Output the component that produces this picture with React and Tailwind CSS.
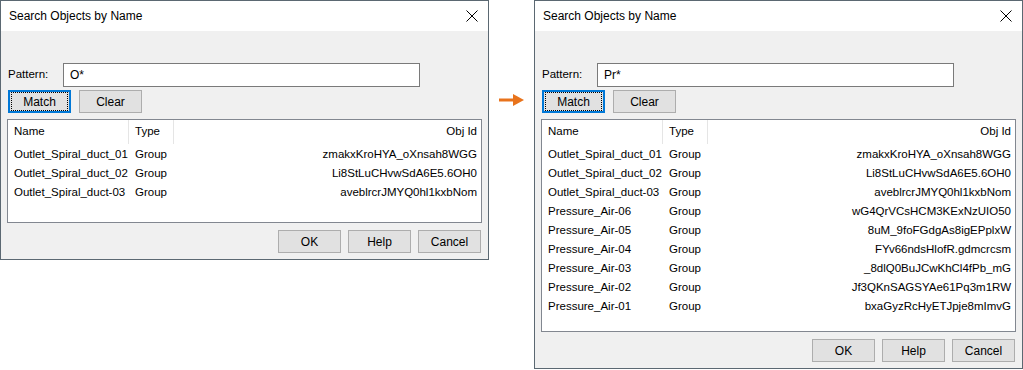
import React from 'react';

const leftRows = [
  ['Outlet_Spiral_duct_01', 'Group', 'zmakxKroHYA_oXnsah8WGG'],
  ['Outlet_Spiral_duct_02', 'Group', 'Li8StLuCHvwSdA6E5.6OH0'],
  ['Outlet_Spiral_duct-03', 'Group', 'aveblrcrJMYQ0hl1kxbNom'],
];

const rightRows = [
  ...leftRows,
  ['Pressure_Air-06', 'Group', 'wG4QrVCsHCM3KExNzUIO50'],
  ['Pressure_Air-05', 'Group', '8uM_9foFGdgAs8igEPplxW'],
  ['Pressure_Air-04', 'Group', 'FYv66ndsHlofR.gdmcrcsm'],
  ['Pressure_Air-03', 'Group', '_8dlQ0BuJCwKhCl4fPb_mG'],
  ['Pressure_Air-02', 'Group', 'Jf3QKnSAGSYAe61Pq3m1RW'],
  ['Pressure_Air-01', 'Group', 'bxaGyzRcHyETJpje8mImvG'],
];

const WinButton = ({ children, focused }) => (
  <div
    className={`w-[63px] h-[23px] bg-[#e1e1e1] flex items-center justify-center ${
      focused ? 'border-2 border-[#0078d7]' : 'border border-[#adadad]'
    }`}
  >
    {focused ? (
      <div className="w-full h-full m-[1px] border border-dotted border-black flex items-center justify-center">
        {children}
      </div>
    ) : (
      children
    )}
  </div>
);

const Dialog = ({ pattern, rows, listHeight }) => (
  <div className="w-[489px] flex flex-col border border-[#5b6872] bg-[#f0f0f0] text-[11.5px] text-black">
    {/* title bar */}
    <div className="h-[30px] bg-white flex items-center justify-between pl-[8px] pr-[10px] text-[12px]">
      <span>Search Objects by Name</span>
      <svg width="12" height="12" viewBox="0 0 12 12">
        <path d="M0.5 0.5 L11.5 11.5 M11.5 0.5 L0.5 11.5" stroke="#000" strokeWidth="1" />
      </svg>
    </div>

    <div className="flex flex-col px-[6px] pt-[32px] pb-[6px]">
      <div className="flex items-center h-[24px]">
        <span className="w-[56px] pl-[1px]">Pattern:</span>
        <div className="w-[357px] h-[24px] bg-white border border-[#7a7a7a] flex items-center pl-[6px] text-[12px]">
          {pattern}
        </div>
      </div>

      <div className="flex gap-[8px] mt-[3px] pl-[1px] text-[12px]">
        <WinButton focused>Match</WinButton>
        <WinButton>Clear</WinButton>
      </div>

      <div
        className="mt-[6px] border border-[#828790] bg-white flex flex-col"
        style={{ height: listHeight }}
      >
        <div className="flex h-[24px] items-center">
          <div className="w-[121px] pl-[6px] border-r border-[#e5e5e5] h-full flex items-center">Name</div>
          <div className="w-[45px] pl-[6px] border-r border-[#e5e5e5] h-full flex items-center">Type</div>
          <div className="flex-1 text-right pr-[4px]">Obj Id</div>
        </div>
        <div className="flex flex-col pt-[1px]">
          {rows.map(([name, type, id]) => (
            <div key={name} className="flex h-[19px] items-center">
              <div className="w-[121px] pl-[6px] whitespace-nowrap">{name}</div>
              <div className="w-[45px] pl-[6px]">{type}</div>
              <div className="flex-1 text-right pr-[4px] whitespace-nowrap">{id}</div>
            </div>
          ))}
        </div>
      </div>

      <div className="flex justify-end gap-[7px] mt-[7px] pr-[1px] text-[12px]">
        <WinButton>OK</WinButton>
        <WinButton>Help</WinButton>
        <WinButton>Cancel</WinButton>
      </div>
    </div>
  </div>
);

export default function App() {
  return (
    <div
      className="w-[1023px] h-[370px] bg-white flex items-start"
      style={{ fontFamily: '"Liberation Sans", Arial, sans-serif' }}
    >
      <Dialog pattern="O*" rows={leftRows} listHeight={104} />
      <div className="w-[45px] flex justify-start pt-[93px] pl-[10px]">
        <svg width="26" height="14" viewBox="0 0 26 14">
          <path d="M0 7 H16" stroke="#e8731c" strokeWidth="3" />
          <path d="M14 1 L25 7 L14 13 Z" fill="#e8731c" />
        </svg>
      </div>
      <Dialog pattern="Pr*" rows={rightRows} listHeight={213} />
    </div>
  );
}
